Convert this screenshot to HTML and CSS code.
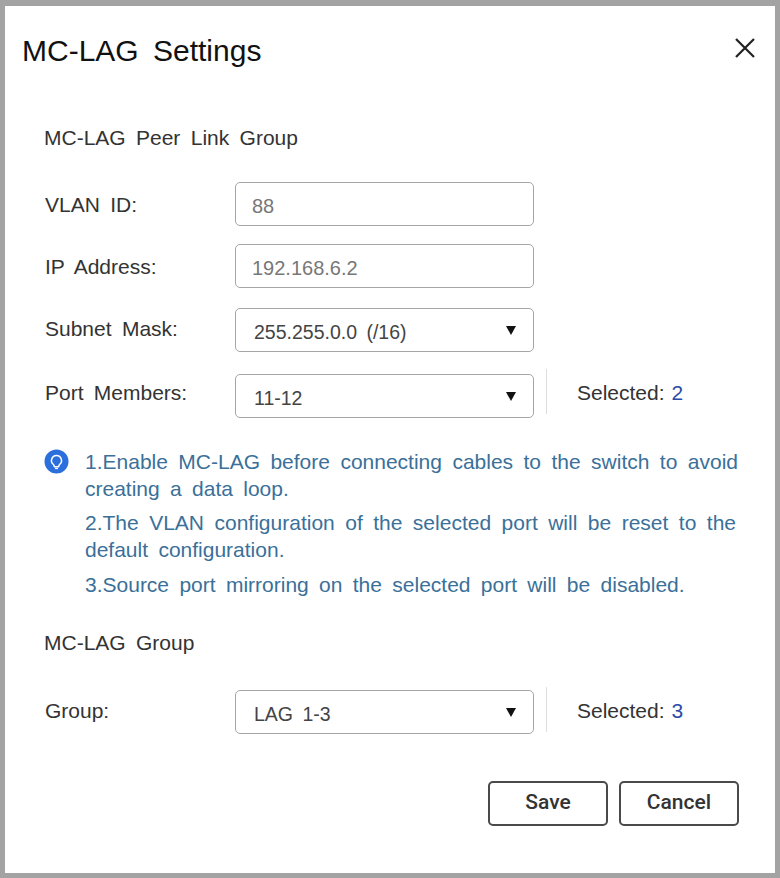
FILE: index.html
```html
<!DOCTYPE html>
<html lang="en">
<head>
    <meta charset="UTF-8">
    <meta name="viewport" content="width=device-width, initial-scale=1.0">
    <title>MC-LAG Settings</title>
    <link rel="stylesheet" href="styles.css">
</head>
<body>
    <div class="modal">
        <div class="modal-header">
            <h1>MC-LAG Settings</h1>
            <button class="close-btn" aria-label="Close">
                <svg width="20" height="20" viewBox="0 0 20 20"><path d="M1 1L19 19M19 1L1 19" stroke="#222" stroke-width="2.2" fill="none"/></svg>
            </button>
        </div>

        <h2 class="section-title">MC-LAG Peer Link Group</h2>

        <div class="form-row row-vlan">
            <label>VLAN ID:</label>
            <div class="field field-input muted">88</div>
        </div>
        <div class="form-row row-ip">
            <label>IP Address:</label>
            <div class="field field-input muted">192.168.6.2</div>
        </div>
        <div class="form-row row-mask">
            <label>Subnet Mask:</label>
            <div class="field field-select"><span>255.255.0.0 (/16)</span><i class="caret"></i></div>
        </div>
        <div class="form-row row-ports">
            <label>Port Members:</label>
            <div class="field field-select"><span>11-12</span><i class="caret"></i></div>
            <div class="selected">Selected: <b>2</b></div>
        </div>

        <div class="hint">
            <svg class="hint-icon" width="25" height="25" viewBox="0 0 25 25">
                <circle cx="12.5" cy="12.5" r="12" fill="#2b6fdc"/>
                <path d="M12.5 6.5a5 5 0 0 0-3 9l1 2.2h4l1-2.2a5 5 0 0 0-3-9z" fill="none" stroke="#fff" stroke-width="1.5"/>
                <path d="M11 19.5h3" stroke="#fff" stroke-width="1.3"/>
            </svg>
            <div class="hint-text">
                <p>1.Enable MC-LAG before connecting cables to the switch to avoid creating a data loop.</p>
                <p class="second">2.The VLAN configuration of the selected port will be reset to the default configuration.</p>
                <p class="third">3.Source port mirroring on the selected port will be disabled.</p>
            </div>
        </div>

        <h2 class="section-title group-title">MC-LAG Group</h2>

        <div class="form-row row-group">
            <label>Group:</label>
            <div class="field field-select"><span>LAG 1-3</span><i class="caret"></i></div>
            <div class="selected">Selected: <b>3</b></div>
        </div>

        <div class="actions">
            <button class="btn">Save</button>
            <button class="btn">Cancel</button>
        </div>
    </div>
</body>
</html>
```

FILE: styles.css
```css
* {
    box-sizing: border-box;
}

html, body {
    margin: 0;
    height: 100%;
}

body {
    font-family: "Liberation Sans", Arial, sans-serif;
    font-size: 21px;
    color: #333;
    background-color: #fff;
}

.modal {
    height: 878px;
    border: 5px solid #a3a3a3;
    border-top-width: 6px;
    padding: 0 36px 0 39px;
    word-spacing: 4.5px;
}

.modal-header {
    display: flex;
    justify-content: space-between;
    align-items: center;
    height: 90px;
    margin-left: -22px;
}

.modal-header h1 {
    margin: 0;
    font-size: 30px;
    font-weight: normal;
    word-spacing: 6px;
    color: #111;
}

.close-btn {
    border: none;
    background: none;
    padding: 0;
    margin: -7px -16px 0 0;
    width: 20px;
    height: 20px;
    display: block;
}

.close-btn svg {
    display: block;
}

.section-title {
    margin: 0;
    font-size: 21px;
    font-weight: normal;
    line-height: 24px;
    padding-top: 30px;
}

.form-row {
    display: flex;
    align-items: flex-start;
    height: 44px;
}

.row-vlan { margin-top: 32px; }
.row-ip { margin-top: 18px; }
.row-mask { margin-top: 20px; }
.row-ports { margin-top: 22px; }
.row-group { margin-top: 35px; }

.form-row label {
    width: 190px;
    margin-left: 1px;
    line-height: 44px;
    height: 44px;
    margin-top: 1px;
    flex: none;
}

.row-mask label {
    margin-top: -1px;
}

.row-ports label {
    margin-top: -3px;
}

.row-group label {
    margin-top: -1px;
}

.field {
    width: 299px;
    height: 44px;
    border: 1px solid #a6a6a6;
    border-radius: 5px;
    padding: 4px 17px 0 16px;
    display: flex;
    align-items: center;
    justify-content: space-between;
    background-color: #fff;
    font-size: 20px;
    word-spacing: 4px;
}

.field-select {
    padding-left: 18px;
    font-size: 19.5px;
    color: #444;
}

.muted {
    color: #777;
}

.caret {
    width: 0;
    height: 0;
    margin-top: -4px;
    border-left: 5.5px solid transparent;
    border-right: 5.5px solid transparent;
    border-top: 9px solid #111;
}

.selected {
    margin: -5px 0 0 12px;
    height: 45px;
    line-height: 48px;
    padding-left: 30px;
    border-left: 1px solid #ddd;
    word-spacing: 1px;
    white-space: nowrap;
}

.row-group .selected {
    margin-top: -3px;
    line-height: 47px;
}

.selected b {
    font-weight: normal;
    color: #2a4ba8;
}

.hint {
    display: flex;
    margin-top: 30px;
    color: #3a7099;
}

.hint-icon {
    flex: none;
    margin: 1px 16px 0 0;
    display: block;
}

.hint-text {
    width: 653px;
    line-height: 27px;
}

.hint-text p {
    margin: 0 0 7px;
    text-align: justify;
}

.hint-text .second {
    padding-right: 2px;
}

.hint-text .third {
    margin-top: 8px;
}

.group-title {
    padding-top: 26px;
}

.actions {
    display: flex;
    justify-content: flex-end;
    gap: 11px;
    margin-top: 47px;
}

.btn {
    width: 120px;
    height: 45px;
    font-family: Roboto, "Liberation Sans", sans-serif;
    font-size: 21px;
    font-weight: 500;
    color: #333;
    background-color: #fff;
    border: 2px solid #4a4a4a;
    border-radius: 5px;
    padding: 0 0 3px;
}
```
